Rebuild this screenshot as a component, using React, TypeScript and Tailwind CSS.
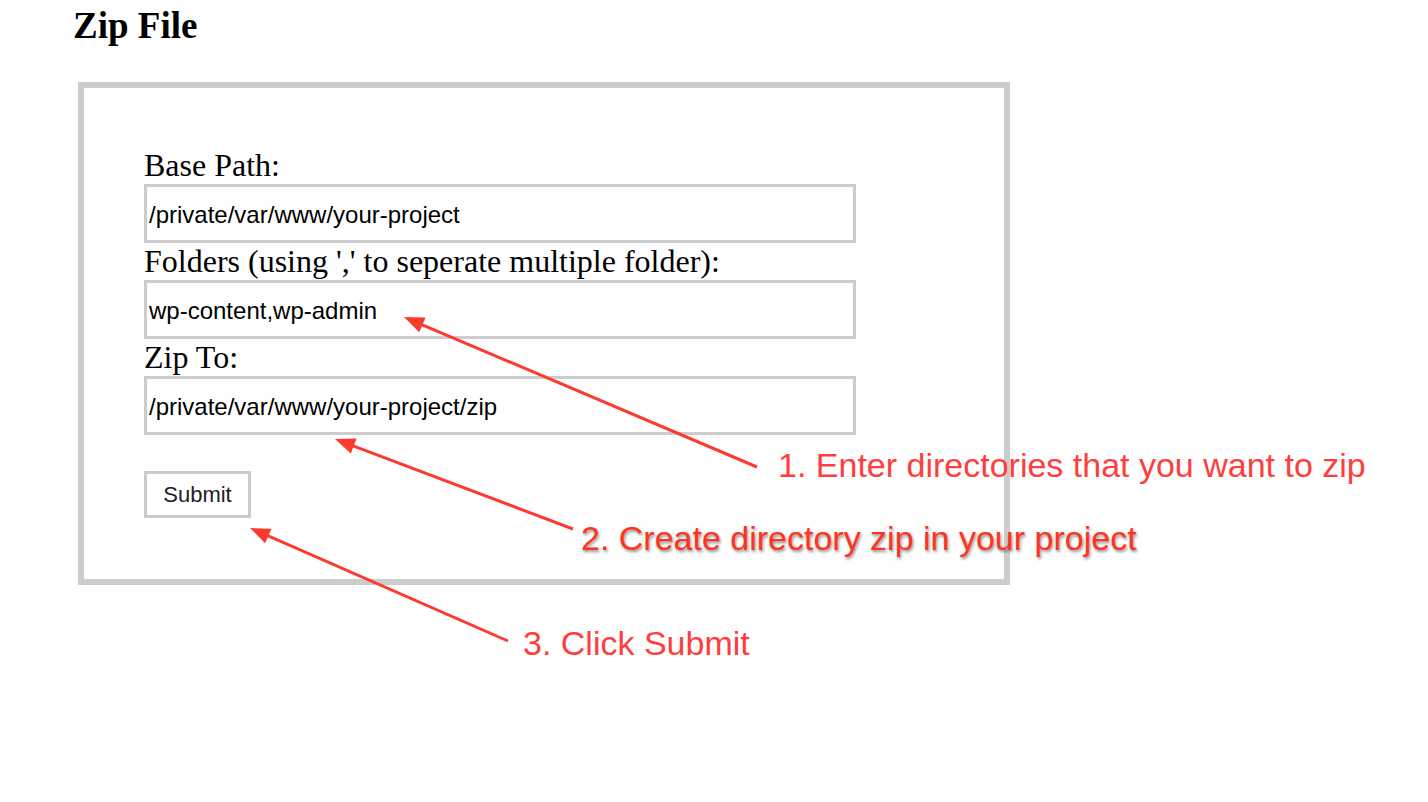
import React from 'react';

interface Arrow {
    x1: number;
    y1: number;
    x2: number;
    y2: number;
}

// tail (x1,y1) -> tip (x2,y2)
const arrows: Arrow[] = [
    { x1: 757, y1: 467, x2: 404, y2: 317 },
    { x1: 573, y1: 529, x2: 335, y2: 439 },
    { x1: 508, y1: 641, x2: 250, y2: 528 },
];

const ArrowShape: React.FC<Arrow> = ({ x1, y1, x2, y2 }) => {
    const len = Math.hypot(x2 - x1, y2 - y1);
    const ux = (x2 - x1) / len;
    const uy = (y2 - y1) / len;
    const headLen = 20;
    const headHalf = 8;
    const bx = x2 - ux * headLen;
    const by = y2 - uy * headLen;
    const points = [
        `${x2},${y2}`,
        `${bx - uy * headHalf},${by + ux * headHalf}`,
        `${bx + uy * headHalf},${by - ux * headHalf}`,
    ].join(' ');
    return (
        <g>
            <line x1={x1} y1={y1} x2={bx + ux * 2} y2={by + uy * 2} stroke="#fc3a2e" strokeWidth={3} />
            <polygon points={points} fill="#fc3a2e" />
        </g>
    );
};

const Field: React.FC<{ label: string; value: string }> = ({ label, value }) => (
    <div className="flex flex-col">
        <label className="text-[32px] leading-[37px] text-black">{label}</label>
        <div className="w-[712px] h-[59px] border-[3px] border-[#cccccc] pl-[2px] pt-[3px] flex items-center font-['Liberation_Sans',Arial,sans-serif] text-[24px] text-black">
            {value}
        </div>
    </div>
);

export default function App() {
    return (
        <div className="relative w-full h-[802px] bg-white overflow-hidden font-['Liberation_Serif','Times_New_Roman',serif]">
            <h1 className="ml-[73px] pt-[4px] text-[37px] leading-[44px] font-bold text-black">Zip File</h1>

            <div className="ml-[78px] mt-[34px] w-[932px] border-[6px] border-[#cccccc] pt-[59px] pb-[61px] pl-[60px] flex flex-col items-start">
                <Field label="Base Path:" value="/private/var/www/your-project" />
                <Field label="Folders (using ',' to seperate multiple folder):" value="wp-content,wp-admin" />
                <Field label="Zip To:" value="/private/var/www/your-project/zip" />
                <button className="mt-[36px] w-[107px] h-[47px] border-[3px] border-[#cccccc] bg-white font-['Liberation_Sans',Arial,sans-serif] text-[22px] text-[#222222] flex items-center justify-center">
                    Submit
                </button>
            </div>

            {/* annotations drawn over the form */}
            <svg className="absolute inset-0 pointer-events-none" width="1428" height="802">
                {arrows.map((a, i) => (
                    <ArrowShape key={i} {...a} />
                ))}
            </svg>
            <div className="absolute left-[778px] top-[448px] font-['Liberation_Sans',Arial,sans-serif] text-[34px] leading-[34px] text-[#ff3d3d] whitespace-nowrap">
                1. Enter directories that you want to zip
            </div>
            <div className="absolute left-[581px] top-[521px] font-['Liberation_Sans',Arial,sans-serif] text-[34px] leading-[34px] text-[#ff3322] whitespace-nowrap [text-shadow:1px_2px_3px_rgba(0,0,0,0.45)]">
                2. Create directory zip in your project
            </div>
            <div className="absolute left-[523px] top-[626px] font-['Liberation_Sans',Arial,sans-serif] text-[34px] leading-[34px] text-[#ff3d3d] whitespace-nowrap">
                3. Click Submit
            </div>
        </div>
    );
}
